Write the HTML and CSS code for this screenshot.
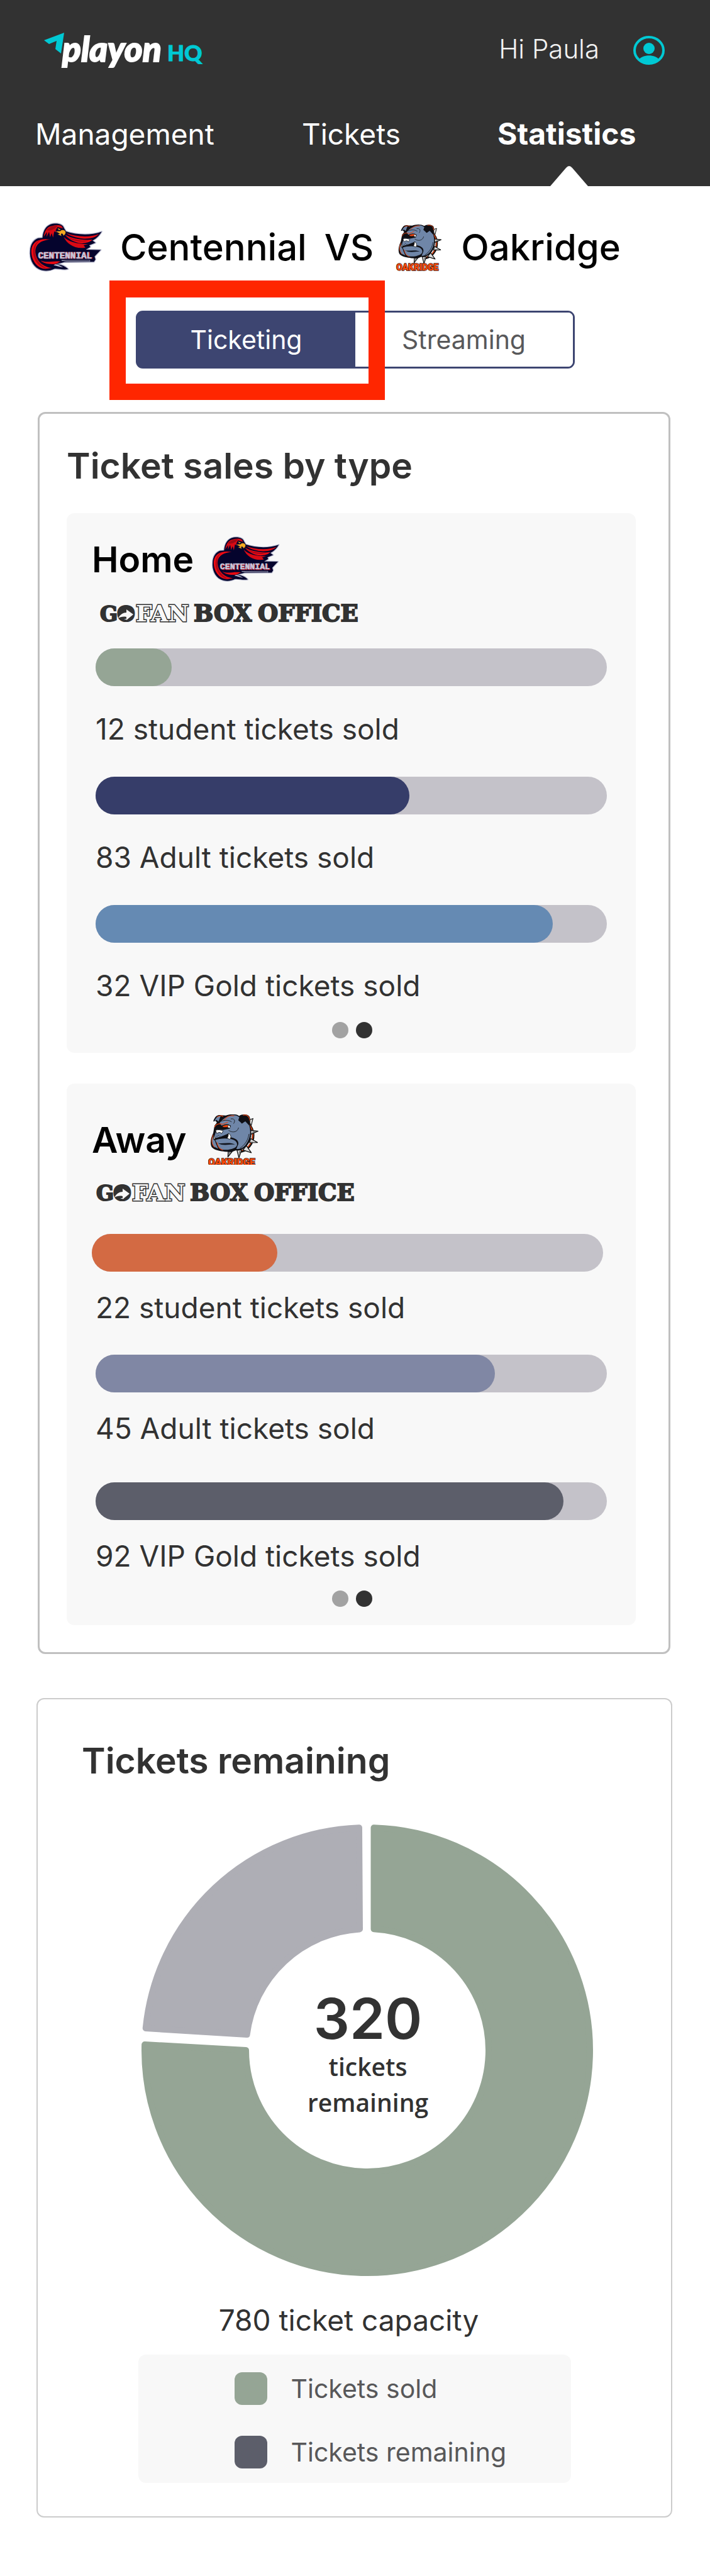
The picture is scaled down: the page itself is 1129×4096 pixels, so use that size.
FILE: index.html
```html
<!DOCTYPE html>
<html lang="en">
<head>
<meta charset="utf-8">
<meta name="viewport" content="width=device-width, initial-scale=1">
<title>PlayOn HQ – Statistics</title>
<link rel="stylesheet" href="styles.css">
</head>
<body>
<svg class="defs" aria-hidden="true">
  <defs>
    <g id="hawk">
      <path d="M160 172C165 120 185 85 230 76C265 70 300 80 306 105L320 128C390 150 480 158 562 130C545 160 520 180 500 190L520 205L478 222L485 234L455 252L556 254L514 298L520 318L510 334L310 336L255 350C290 352 320 368 334 384C300 392 265 378 240 382C210 398 165 400 135 384C90 360 72 310 76 260C78 215 100 185 130 174Z" fill="#05042d" stroke="#bcbed2" stroke-width="11" stroke-linejoin="round"/>
      <path d="M160 172C165 120 185 85 230 76C265 70 300 80 306 105L320 128C390 150 480 158 562 130C545 160 520 180 500 190L520 205L478 222L485 234L455 252L556 254L514 298L520 318L510 334L310 336L255 350C290 352 320 368 334 384C300 392 265 378 240 382C210 398 165 400 135 384C90 360 72 310 76 260C78 215 100 185 130 174Z" fill="#05042d"/>
      <path d="M168 165C175 120 195 95 225 90L196 103C225 88 262 78 290 92L300 108L262 98L250 120L256 135L240 128L232 170L222 140L212 168L205 130L188 165L190 132Z" fill="#d90a14"/>
      <path d="M188 120C205 100 235 88 262 90L245 108L225 118L205 122Z" fill="#a00815"/>
      <path d="M262 106L284 114L272 120Z" fill="#f2a51d"/>
      <path d="M248 127L282 125C285 115 312 112 318 132C319 145 310 152 302 158C300 145 292 140 286 146L290 160L262 148L277 143Z" fill="#f6ab22" stroke="#05042d" stroke-width="2"/>
      <path d="M322 140C390 165 480 172 545 145C520 172 475 180 430 176C390 172 350 160 322 140Z" fill="#e60a12"/>
      <path d="M314 152C360 175 430 192 500 184C480 204 440 212 405 206C370 198 335 178 314 152Z" fill="#f00a12"/>
      <path d="M304 164C340 200 390 212 470 214L440 222L452 238C380 250 325 212 304 164Z" fill="#d90a14"/>
      <path d="M330 165C370 185 430 194 475 190C430 205 370 195 330 165Z" fill="#9d0617"/>
      <path d="M215 183C150 172 90 190 84 255C82 320 120 378 180 383L225 376C165 370 118 330 112 270C110 220 140 190 215 183Z" fill="#f00a12"/>
      <path d="M150 184C105 200 90 250 100 295C112 340 145 375 190 380C140 355 108 310 108 262C108 225 125 198 150 184Z" fill="#a90715"/>
      <path d="M148 326C190 345 225 325 284 333C265 338 262 350 236 350C200 352 165 345 148 326Z" fill="#e60a12"/>
      <path d="M236 358C250 345 265 352 300 372C275 370 255 360 236 358Z" fill="#bcbed2"/>
      <path d="M290 325L482 324L482 332L320 331Z" fill="none" stroke="#bcbed2" stroke-width="3"/>
      <text x="134" y="312" class="hawk-name hawk-name-shadow">CENTENNIAL</text>
      <text x="130" y="310" class="hawk-name">CENTENNIAL</text>
    </g>
    <g id="bulldog">
      <path d="M298 118L328 108L318 148Z" fill="#d8d8d8" stroke="#111" stroke-width="4"/>
      <path d="M300 140C338 175 338 235 305 275C285 298 265 306 245 306" fill="none" stroke="#111" stroke-width="15"/>
      <path d="M305 145C336 180 334 235 300 275C285 292 265 300 240 304" fill="none" stroke="#e8430f" stroke-width="6"/>
      <path d="M310 178L358 183L314 202ZM314 228L355 251L308 252ZM288 270L318 312L268 296ZM232 296L244 342L260 296ZM180 304L178 337L204 304Z" fill="#dcdcdc" stroke="#111" stroke-width="5" stroke-linejoin="round"/>
      <path d="M330 185L350 184L318 196ZM320 246L348 250L312 250ZM244 305L246 330L254 300ZM184 310L180 330L194 308Z" fill="#777"/>
      <path d="M90 125C100 95 115 82 138 88L165 90C190 80 225 78 245 92C262 80 290 80 304 92C314 102 312 125 308 145C325 185 320 240 290 272C272 292 250 300 225 298L200 308L160 306C135 302 100 300 82 280C70 262 74 225 90 195L98 150L112 132L104 122Z" fill="#0f0f14"/>
      <path d="M98 122C106 102 118 92 134 94L122 125L110 116ZM128 135C145 110 175 92 205 88C225 86 240 94 246 100L240 118L262 138L282 124L306 150C318 190 310 235 280 270C265 286 245 292 228 290L240 262C245 240 225 225 195 220L185 196L130 218L94 226L104 192L112 172L150 176L190 168L196 150L165 144L140 150Z" fill="#6f86a8"/>
      <path d="M84 215C80 235 82 270 98 278L120 288L108 262L102 245ZM102 236C130 225 180 222 215 236C240 250 238 275 215 284C185 298 145 298 125 285L112 255Z" fill="#6f86a8"/>
      <path d="M118 254C145 262 185 245 222 264C195 258 150 276 118 254Z" fill="#10131c"/>
      <path d="M260 102C275 90 292 96 302 132L284 118L262 138C250 125 252 112 260 102Z" fill="#0f0f14"/>
      <path d="M268 88C288 82 308 92 308 120M112 100C120 90 140 88 150 96M98 160C104 140 125 135 148 142L178 128M152 120C170 95 195 88 215 92M90 205C78 235 80 262 98 280M112 250C118 280 130 292 148 296" fill="none" stroke="#e8430f" stroke-width="4"/>
      <path d="M145 152C160 144 178 140 190 150L182 162C170 158 160 166 145 158Z" fill="#e8430f" stroke="#111" stroke-width="4"/>
      <path d="M178 150C186 146 196 156 190 164L178 162Z" fill="#fff" stroke="#111" stroke-width="2"/>
      <path d="M104 178C120 172 138 176 150 182L140 198C134 188 122 188 112 198Z" fill="#fff" stroke="#111" stroke-width="3"/>
      <path d="M180 196C196 204 200 218 190 232L174 226C178 216 182 208 180 196ZM94 206L102 228L92 232Z" fill="#fff" stroke="#111" stroke-width="3"/>
      <path d="M195 110C215 105 225 120 212 138M182 178C205 195 235 190 242 162M125 128C150 118 180 112 200 128M250 285C285 262 300 230 304 200" fill="none" stroke="#111" stroke-width="3"/>
      <path d="M120 208h1M130 214h1M112 214h1M124 220h1" stroke="#111" stroke-width="4" stroke-linecap="round"/>
      <text x="60" y="387" class="dog-name">OAKRIDGE</text>
    </g>
    <g id="gofan">
      <text x="-1" y="26" class="slab slab-small">G</text>
      <text x="26" y="26" class="slab slab-small">O</text>
      <rect x="34" y="4" width="13" height="18" fill="#323232"/>
      <path d="M28 21C31 15 36 12 41 12V7L52 15L41 24V19C36 18 31 19 28 21Z" fill="#f8f8f8"/>
      <text x="56" y="26" class="slab slab-outline">FAN</text>
      <text x="148" y="26" class="slab">BOX</text>
      <text x="250" y="26" class="slab">OFFICE</text>
    </g>
  </defs>
</svg>

<header class="site-header">
  <div class="top-row">
    <a class="brand" href="#" aria-label="playon HQ">
      <svg width="256" height="60" viewBox="0 0 256 60">
        <path d="M0 16L32 4L27 37L18 30L20 17L8 22Z" fill="#00c9d4"/>
        <text x="29" y="50" class="brand-play">playon</text>
        <text x="196" y="49" class="brand-hq">HQ</text>
      </svg>
    </a>
    <div class="account">
      <span class="greeting">Hi Paula</span>
      <a href="#" class="avatar" aria-label="Account">
        <svg width="50" height="48" viewBox="0 0 50 48">
          <ellipse cx="25" cy="26" rx="23" ry="21" fill="none" stroke="#00c9d4" stroke-width="4"/>
          <ellipse cx="25" cy="23" rx="9" ry="9" fill="#00c9d4"/>
          <path d="M9 41C14 32 36 32 41 41C34 50 16 50 9 41Z" fill="#00c9d4"/>
        </svg>
      </a>
    </div>
  </div>
  <nav class="main-nav">
    <div><a href="#">Management</a></div>
    <div><a href="#">Tickets</a></div>
    <div><a href="#" class="current" aria-current="page">Statistics
      <svg class="pointer" width="60" height="32" viewBox="0 0 60 32" aria-hidden="true"><path d="M0 32L25 3Q30 -3 35 3L60 32Z" fill="#fff"/></svg></a></div>
  </nav>
</header>

<main>
  <h1 class="matchup">
    <svg class="hawk-logo-large" viewBox="68 64 500 342" aria-hidden="true"><use href="#hawk"/></svg>
    <span>Centennial</span>
    <span>VS</span>
    <svg class="dog-logo" viewBox="60 78 312 314" aria-hidden="true"><use href="#bulldog"/></svg>
    <span>Oakridge</span>
  </h1>

  <div class="switch">
    <button type="button" class="switch-option selected">Ticketing</button>
    <button type="button" class="switch-option">Streaming</button>
    <div class="highlight"></div>
  </div>

  <section class="card sales">
    <h2>Ticket sales by type</h2>

    <article class="panel home">
      <h3><span>Home</span><svg class="hawk-logo" viewBox="68 64 500 342" aria-hidden="true"><use href="#hawk"/></svg></h3>
      <svg class="gofan" viewBox="0 0 412 26"><use href="#gofan"/></svg>
      <ul class="bars">
        <li><div class="track"><div class="fill sage" style="width:14.9%"></div></div><p>12 student tickets sold</p></li>
        <li><div class="track"><div class="fill navy" style="width:61.4%"></div></div><p>83 Adult tickets sold</p></li>
        <li><div class="track"><div class="fill blue" style="width:89.4%"></div></div><p>32 VIP Gold tickets sold</p></li>
      </ul>
      <div class="dots"><button type="button" aria-label="Page 1"></button><button type="button" class="on" aria-label="Page 2"></button></div>
    </article>

    <article class="panel away">
      <h3><span>Away</span><svg class="dog-logo-small" viewBox="60 83 312 301" aria-hidden="true"><use href="#bulldog"/></svg></h3>
      <svg class="gofan" viewBox="0 0 412 26"><use href="#gofan"/></svg>
      <ul class="bars">
        <li><div class="track shifted"><div class="fill orange" style="width:36.3%"></div></div><p>22 student tickets sold</p></li>
        <li><div class="track"><div class="fill lavender" style="width:78.1%"></div></div><p>45 Adult tickets sold</p></li>
        <li><div class="track"><div class="fill slate" style="width:91.5%"></div></div><p>92 VIP Gold tickets sold</p></li>
      </ul>
      <div class="dots"><button type="button" aria-label="Page 1"></button><button type="button" class="on" aria-label="Page 2"></button></div>
    </article>
  </section>

  <section class="card remaining">
    <h2>Tickets remaining</h2>
    <svg class="donut" viewBox="0 0 718 718" role="img" aria-label="320 tickets remaining">
      <path class="ring-sold" d="M369.500 5.200A354 354 0 1 1 5.100 350L166 359A193 193 0 1 0 369.500 166.300Z"/>
      <path class="ring-left" d="M346 5.200L347 166.400A193 193 0 0 0 167.600 334L6.700 324A354 354 0 0 1 346 5.200Z"/>
      <text class="donut-number" x="360" y="341">320</text>
      <text class="donut-label" x="360" y="400">tickets</text>
      <text class="donut-label" x="360" y="457">remaining</text>
    </svg>
    <p class="capacity">780 ticket capacity</p>
    <ul class="legend">
      <li><span class="swatch sage"></span>Tickets sold</li>
      <li><span class="swatch slate"></span>Tickets remaining</li>
    </ul>
  </section>
</main>
</body>
</html>
```
FILE: styles.css
```css
* { box-sizing: border-box; }

body {
  margin: 0;
  background: #fff;
  color: #323232;
  font-family: Inter, "Liberation Sans", sans-serif;
}

h1, h2, h3, p, ul { margin: 0; padding: 0; }
ul { list-style: none; }
a { color: inherit; text-decoration: none; }
svg { display: block; overflow: visible; }
button { font: inherit; cursor: pointer; }

.defs { position: absolute; width: 0; height: 0; }

/* Header */
.site-header {
  background: #323232;
  color: #fff;
  padding-top: 48px;
}

.top-row {
  display: flex;
  align-items: center;
  justify-content: space-between;
  height: 60px;
  padding: 0 72px 0 70px;
}

.brand-play {
  font: italic 900 55px Lato, sans-serif;
  fill: #fff;
  stroke: #fff;
  stroke-width: 2px;
}

.brand-hq {
  font: 900 35px Lato, sans-serif;
  fill: #00c9d4;
  stroke: #00c9d4;
  stroke-width: 1px;
}

.account {
  display: flex;
  align-items: center;
  gap: 54px;
}

.greeting {
  color: #f2f2f2;
  font-size: 42px;
  font-weight: 300;
  line-height: 54px;
}

.main-nav {
  display: grid;
  grid-template-columns: 424fr 311fr 338fr;
  padding: 75px 0 0 56px;
  font-size: 46px;
  line-height: 60px;
}

.main-nav a {
  display: inline-block;
  position: relative;
  padding-bottom: 53px;
}

.main-nav div { display: flex; }
.main-nav .current { font-size: 48px; font-weight: 700; }

.pointer {
  position: absolute;
  bottom: 0;
  left: 50%;
  margin-left: -26px;
}

/* Match title */
.matchup {
  display: flex;
  align-items: center;
  gap: 28px;
  height: 82px;
  margin: 56px 46px 0;
  color: #000;
  font-size: 58px;
  font-weight: 500;
  white-space: nowrap;
}

.hawk-logo-large { width: 117px; height: 80px; }
.dog-logo { width: 75px; height: 75px; margin-left: 8px; }

.hawk-name {
  font: 700 61px "Liberation Mono", monospace;
  fill: #c6c7da;
  stroke: #c6c7da;
  stroke-width: 3px;
}

.hawk-name-shadow { fill: #c00c20; stroke: #c00c20; }

.dog-name {
  font: 900 58px Roboto, sans-serif;
  fill: #fb4a08;
  stroke: #3a2018;
  stroke-width: 6px;
  paint-order: stroke;
}

/* Ticketing / streaming switch */
.switch {
  display: flex;
  position: relative;
  width: 698px;
  max-width: 80%;
  height: 92px;
  margin: 60px auto 69px;
  border: 3px solid #3d4571;
  border-radius: 11px;
}

.switch-option {
  flex: 1;
  padding: 0;
  border: 0;
  background: #fff;
  color: #58585a;
  font-size: 41px;
  border-radius: 8px;
}

.switch-option.selected {
  background: #3d4571;
  color: #fff;
  border-radius: 0;
}

.highlight {
  position: absolute;
  top: -51px;
  bottom: -53px;
  left: -45px;
  right: calc(50% - 47px);
  border: 26px solid #ff2600;
  border-top-width: 27px;
  pointer-events: none;
}

/* Cards */
.card {
  border: 3px solid #c0c0c0;
  border-radius: 12px;
}

.card h2 {
  font-size: 57px;
  font-weight: 600;
  line-height: 66px;
}

.sales {
  margin: 0 63px 70px 60px;
  padding: 50px 52px 43px 43px;
}

.panel {
  margin-top: 49px;
  padding: 37px 40px 23px;
  border-radius: 12px;
  background: #f8f8f8;
}

.panel.home { margin-top: 42px; }
.panel.away { padding-top: 49px; padding-bottom: 29px; }

.panel h3 {
  display: flex;
  align-items: center;
  gap: 28px;
  height: 72px;
  color: #000;
  font-size: 57px;
  font-weight: 600;
}

.panel.away h3 { height: 80px; gap: 34px; }

.hawk-logo { width: 109px; height: 74px; }
.dog-logo-small { width: 83px; height: 80px; overflow: hidden; }

.gofan { width: 412px; height: 26px; margin: 37px 0 43px 14px; }
.away .gofan { margin: 31px 0 53px 8px; }

.slab {
  font: 700 37px "DejaVu Serif", serif;
  fill: #323232;
  stroke: #323232;
  stroke-width: 2px;
}

.slab-small { font-size: 33px; }

.slab-outline {
  font-size: 36px;
  fill: #f8f8f8;
  stroke: #323232;
  stroke-width: 3px;
  paint-order: stroke;
}

.bars { margin: 0 6px; }
.bars li + li { margin-top: 48px; }
.away .bars li:nth-child(2) { margin-top: 47px; }
.away .bars li:nth-child(3) { margin-top: 58px; }

.track {
  height: 60px;
  border-radius: 30px;
  background: #c4c2c9;
}

.track.shifted { margin: 0 6px 0 -6px; }

.fill { height: 100%; border-radius: 30px; }

.sage { background: #95a595; }
.navy { background: #363d69; }
.blue { background: #658ab3; }
.orange { background: #d36a43; }
.lavender { background: #8087a4; }
.slate { background: #5c5e6a; }

.bars p {
  margin-top: 40px;
  font-size: 46px;
  line-height: 56px;
}

.away .bars p { margin-top: 29px; }

.dots {
  display: flex;
  justify-content: center;
  gap: 12px;
  margin-top: 30px;
  padding-left: 2px;
}

.away .dots { margin-top: 27px; }

.dots button {
  width: 26px;
  height: 26px;
  padding: 0;
  border: 0;
  border-radius: 50%;
  background: #a2a2a2;
}

.dots .on { background: #323232; }

/* Remaining tickets */
.remaining {
  margin: 0 60px 92px 58px;
  padding: 65px 70px 53px;
  border: 2px solid #ccc;
}

.donut {
  width: 718px;
  max-width: 100%;
  margin: 68px auto 42px;
  position: relative;
  left: 20px;
}

.ring-sold, .ring-left {
  fill: #95a595;
  stroke: #95a595;
  stroke-width: 10px;
  stroke-linejoin: round;
}

.ring-left { fill: #aeaeb5; stroke: #aeaeb5; }

.donut text { fill: #323232; text-anchor: middle; }
.donut-number { font-size: 90px; font-weight: 600; }
.donut-label { font: 600 39px "Open Sans", sans-serif; }

.capacity {
  padding-right: 18px;
  font-size: 46px;
  line-height: 56px;
  text-align: center;
}

.legend {
  width: 688px;
  max-width: 100%;
  margin: 27px auto 0;
  padding: 28px 0 23px 153px;
  border-radius: 12px;
  background: #f8f8f8;
  color: #58585a;
  font-size: 41px;
}

.legend li {
  display: flex;
  align-items: center;
  gap: 38px;
  height: 52px;
}

.legend li + li { margin-top: 49px; }

.swatch {
  width: 52px;
  height: 52px;
  border-radius: 12px;
}
```
